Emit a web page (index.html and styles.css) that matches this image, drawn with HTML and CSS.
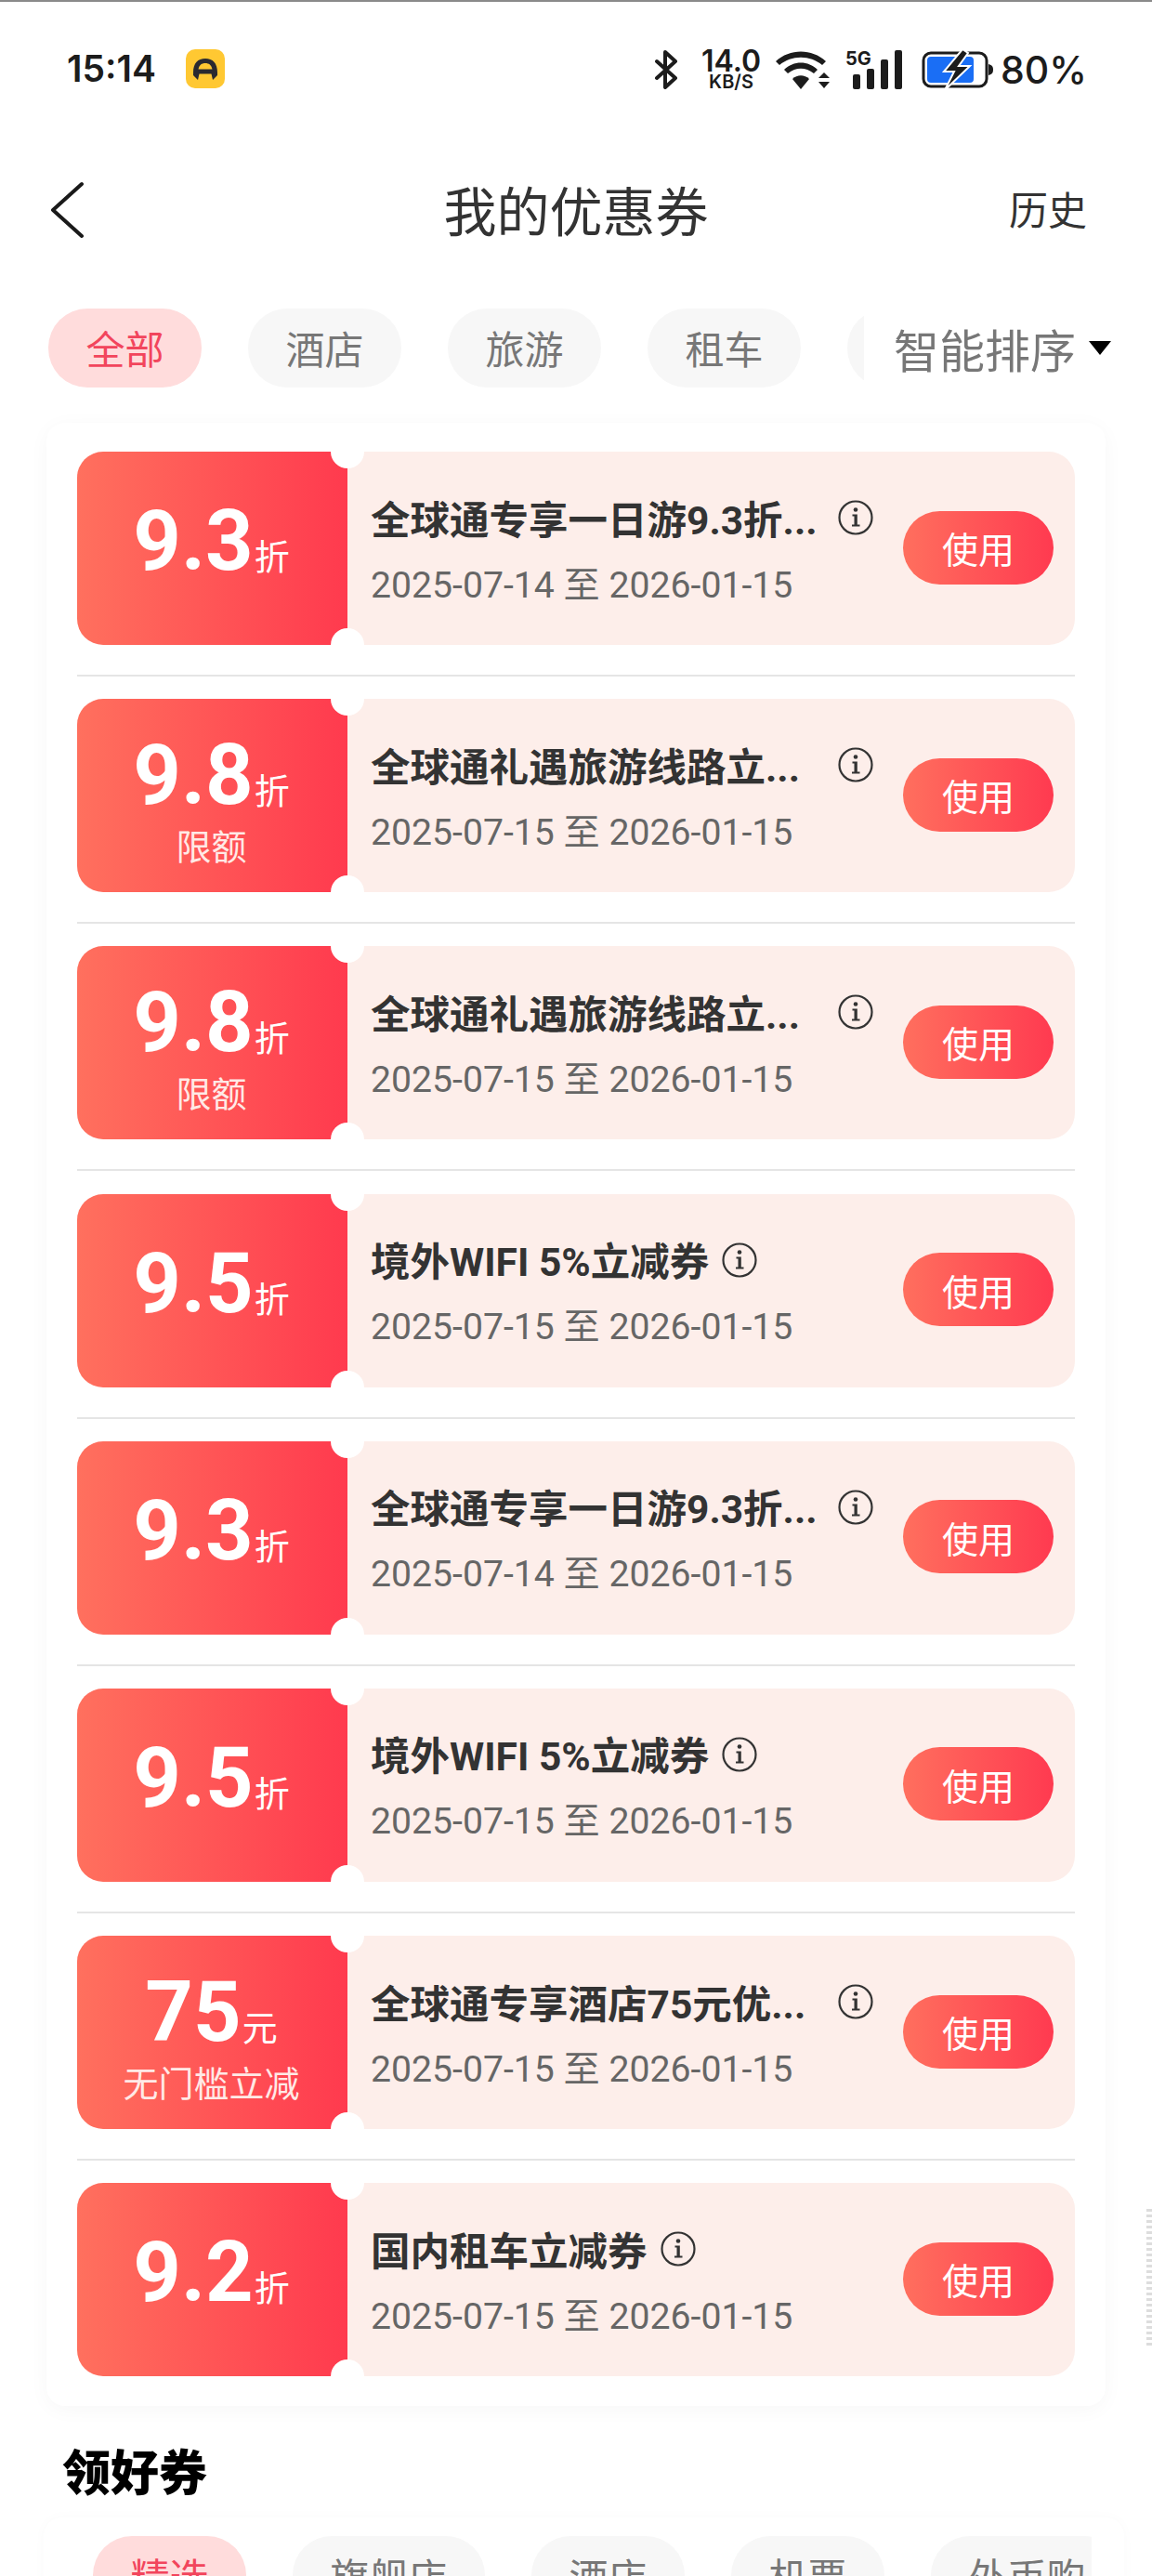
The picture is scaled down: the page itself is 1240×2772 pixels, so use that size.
FILE: index.html
```html
<!DOCTYPE html>
<html lang="zh-CN">
<head>
  <meta charset="UTF-8" />
  <title>我的优惠券</title>
  <link rel="stylesheet" href="styles.css">
</head>
<body>

<div class="statusbar">
  <div class="status-left">
    <span class="time">15:14</span>
    <svg class="app-icon" width="42" height="42" viewBox="0 0 42 42">
      <rect width="42" height="42" rx="10" fill="#ffc832"/>
      <path d="M8 25 C8 15 13 10 21 10 C29 10 34 15 34 25 L34 28 L29 33 L27.500 26.500 L14.500 26.500 L13 33 L8 28 Z M13.500 21.500 L28.500 21.500 C27.500 17 25 15 21 15 C17 15 14.500 17 13.500 21.500 Z" fill="#2a2a30" fill-rule="evenodd"/>
    </svg>
  </div>
  <div class="status-right">
    <svg class="ic-bt" width="26" height="42" viewBox="0 0 26 42" fill="none" stroke="#1c1c1c" stroke-width="4" stroke-linejoin="round" stroke-linecap="round">
      <path d="M3 12 L23 30 L12 40 L12 2 L23 12 L3 30"/>
    </svg>
    <div class="speed">
      <span class="speed-num">14.0</span>
      <span class="speed-unit">KB/S</span>
    </div>
    <svg class="ic-wifi" width="60" height="42" viewBox="0 0 60 42" fill="#1c1c1c">
      <path d="M1 12 C16 -2 40 -2 55 12 L51 16 C38 5 18 5 5 16 Z"/>
      <path d="M10 21 C20 11 36 11 46 21 L42 25 C33 18 23 18 14 25 Z"/>
      <path d="M19 30 C24 25 32 25 37 30 L28 41 Z" transform="translate(0 1)"/>
      <path d="M53 24 L59 30 L47 30 Z"/>
      <path d="M47 34 L59 34 L53 41 Z"/>
    </svg>
    <div class="signal">
      <span class="sig-5g">5G</span>
      <svg width="54" height="42" viewBox="0 0 54 42" fill="#1c1c1c">
        <rect x="0" y="26" width="8" height="16" rx="2"/>
        <rect x="15" y="20" width="8" height="22" rx="2"/>
        <rect x="30" y="10" width="8" height="32" rx="2"/>
        <rect x="45" y="0" width="8" height="42" rx="2"/>
      </svg>
    </div>
    <svg class="ic-batt" width="78" height="44" viewBox="0 0 78 44">
      <rect x="2" y="4" width="68" height="36" rx="8" fill="none" stroke="#1c1c1c" stroke-width="3"/>
      <rect x="6" y="8" width="50" height="28" rx="4" fill="#1a6ef5"/>
      <path d="M72 16 C76 17 77 19 77 22 C77 25 76 27 72 28 Z" fill="#1c1c1c"/>
      <path d="M44 0 L24 24 L35 24 L25 44 L52 18 L40 18 L50 4 Z" fill="#1c1c1c" stroke="#fff" stroke-width="2"/>
    </svg>
    <span class="batt-text">80%</span>
  </div>
</div>

<div class="navbar">
  <svg class="back" width="36" height="62" viewBox="0 0 36 62" fill="none" stroke="#1a1a1a" stroke-width="4" stroke-linecap="round" stroke-linejoin="round">
    <path d="M34 3 L3 31 L34 59"/>
  </svg>
  <div class="nav-title">我的优惠券</div>
  <div class="nav-link">历史</div>
</div>

<div class="filters">
  <div class="tabs">
    <span class="tab active">全部</span>
    <span class="tab">酒店</span>
    <span class="tab">旅游</span>
    <span class="tab">租车</span>
    <span class="tab tab-blank"></span>
  </div>
  <div class="sort">智能排序<i class="sort-arrow"></i></div>
</div>

<div class="card">
  <div class="row">
    <div class="coupon">
      <div class="stub"><div class="amount">9.3<small>折</small></div></div>
      <div class="info">
        <div class="title-row"><span class="title long">全球通专享一日游9.3折...</span><svg class="tip"><use href="#i-info"/></svg></div>
        <div class="date">2025-07-14 至 2026-01-15</div>
      </div>
      <button class="use">使用</button>
    </div>
  </div>
  <div class="row">
    <div class="coupon">
      <div class="stub has-limit"><div class="amount">9.8<small>折</small></div><div class="limit">限额</div></div>
      <div class="info">
        <div class="title-row"><span class="title long">全球通礼遇旅游线路立...</span><svg class="tip"><use href="#i-info"/></svg></div>
        <div class="date">2025-07-15 至 2026-01-15</div>
      </div>
      <button class="use">使用</button>
    </div>
  </div>
  <div class="row">
    <div class="coupon">
      <div class="stub has-limit"><div class="amount">9.8<small>折</small></div><div class="limit">限额</div></div>
      <div class="info">
        <div class="title-row"><span class="title long">全球通礼遇旅游线路立...</span><svg class="tip"><use href="#i-info"/></svg></div>
        <div class="date">2025-07-15 至 2026-01-15</div>
      </div>
      <button class="use">使用</button>
    </div>
  </div>
  <div class="row">
    <div class="coupon">
      <div class="stub"><div class="amount">9.5<small>折</small></div></div>
      <div class="info">
        <div class="title-row"><span class="title">境外WIFI 5%立减券</span><svg class="tip"><use href="#i-info"/></svg></div>
        <div class="date">2025-07-15 至 2026-01-15</div>
      </div>
      <button class="use">使用</button>
    </div>
  </div>
  <div class="row">
    <div class="coupon">
      <div class="stub"><div class="amount">9.3<small>折</small></div></div>
      <div class="info">
        <div class="title-row"><span class="title long">全球通专享一日游9.3折...</span><svg class="tip"><use href="#i-info"/></svg></div>
        <div class="date">2025-07-14 至 2026-01-15</div>
      </div>
      <button class="use">使用</button>
    </div>
  </div>
  <div class="row">
    <div class="coupon">
      <div class="stub"><div class="amount">9.5<small>折</small></div></div>
      <div class="info">
        <div class="title-row"><span class="title">境外WIFI 5%立减券</span><svg class="tip"><use href="#i-info"/></svg></div>
        <div class="date">2025-07-15 至 2026-01-15</div>
      </div>
      <button class="use">使用</button>
    </div>
  </div>
  <div class="row">
    <div class="coupon">
      <div class="stub has-limit"><div class="amount">75<small>元</small></div><div class="limit">无门槛立减</div></div>
      <div class="info">
        <div class="title-row"><span class="title long">全球通专享酒店75元优...</span><svg class="tip"><use href="#i-info"/></svg></div>
        <div class="date">2025-07-15 至 2026-01-15</div>
      </div>
      <button class="use">使用</button>
    </div>
  </div>
  <div class="row">
    <div class="coupon">
      <div class="stub"><div class="amount">9.2<small>折</small></div></div>
      <div class="info">
        <div class="title-row"><span class="title">国内租车立减券</span><svg class="tip"><use href="#i-info"/></svg></div>
        <div class="date">2025-07-15 至 2026-01-15</div>
      </div>
      <button class="use">使用</button>
    </div>
  </div>
</div>

<h2 class="section-title">领好券</h2>

<div class="card-more">
  <div class="tabs-more">
    <span class="tab active">精选</span>
    <span class="tab">旗舰店</span>
    <span class="tab">酒店</span>
    <span class="tab">机票</span>
    <span class="tab">外币购</span>
  </div>
</div>

<div class="edge-mark"></div>

<!-- shared info icon -->
<svg width="0" height="0" class="defs">
  <symbol id="i-info" viewBox="0 0 38 38">
    <circle cx="19" cy="19" r="17.500" fill="none" stroke="#333" stroke-width="2.200"/>
    <circle cx="19" cy="10.500" r="2.300" fill="#333"/>
    <path d="M15.500 15.500 L20.800 15.500 L20.800 26.500 L23.500 26.500 L23.500 28.500 L15 28.500 L15 26.500 L17.500 26.500 L17.500 17.500 L15.500 17.500 Z" fill="#333"/>
  </symbol>
</svg>

</body>
</html>
```

FILE: styles.css
```css
html, body {
  margin: 0;
  height: 2772px;
  overflow: hidden;
  background: #fff;
}
body {
  position: relative;
  border-top: 2px solid #8a8a8a;
  box-sizing: border-box;
  font-family: Roboto, "Noto Sans CJK SC", sans-serif;
  color: #333;
}

/* status bar */
.statusbar {
  height: 148px;
  padding: 0 70px 0 72px;
  display: flex;
  justify-content: space-between;
  align-items: flex-start;
}
.status-left {
  display: flex;
  align-items: center;
  gap: 32px;
  margin-top: 51px;
}
.time {
  font-family: Inter, sans-serif;
  font-weight: 600;
  font-size: 39px;
  line-height: 42px;
  color: #1c1c1c;
}
.app-icon { display: block; }
.status-right {
  display: flex;
  align-items: center;
  margin-top: 51px;
  height: 44px;
}
.status-right svg { display: block; }
.speed {
  margin-left: 24px;
  width: 66px;
  display: flex;
  flex-direction: column;
  align-items: center;
  font-family: Inter, sans-serif;
  font-weight: 600;
  color: #1c1c1c;
}
.speed-num { font-size: 32px; line-height: 26px; }
.speed-unit { font-size: 20px; line-height: 18px; }
.ic-wifi { margin-left: 14px; }
.signal {
  position: relative;
  margin-left: 24px;
  width: 54px;
}
.sig-5g {
  position: absolute;
  left: -8px;
  top: -1px;
  font-family: Inter, sans-serif;
  font-weight: 700;
  font-size: 20px;
  line-height: 20px;
  color: #1c1c1c;
}
.ic-batt { margin-left: 20px; }
.batt-text {
  margin-left: 7px;
  font-family: Inter, sans-serif;
  font-weight: 500;
  font-size: 41px;
  line-height: 44px;
  color: #1c1c1c;
}

/* nav */
.navbar {
  height: 152px;
  padding: 0 70px;
  display: grid;
  grid-template-columns: 1fr auto 1fr;
  align-items: center;
}
.back {
  display: block;
  margin-left: -16px;
}
.nav-title {
  margin-top: -5px;
  font-family: "Noto Sans CJK SC", sans-serif;
  font-size: 57px;
  color: #333;
}
.nav-link {
  margin-top: -5px;
  text-align: right;
  font-family: "Noto Sans CJK SC", sans-serif;
  font-size: 42px;
  color: #333;
}

/* filter tabs */
.filters {
  position: relative;
  padding-left: 52px;
  margin-top: 30px;
  height: 85px;
}
.tabs {
  display: flex;
  gap: 50px;
  overflow: hidden;
}
.tab {
  flex: none;
  height: 85px;
  padding: 0 40.500px;
  border-radius: 42px;
  background: #f7f7f7;
  color: #777;
  font-family: "Noto Sans CJK SC", sans-serif;
  font-size: 42px;
  line-height: 83px;
}
.tab.active {
  background: #ffdcdc;
  color: #f2455c;
}
.tab-blank { width: 84px; }
.sort {
  position: absolute;
  top: 0;
  right: 0;
  left: 930px;
  height: 85px;
  padding-left: 32px;
  background: #fff;
  display: flex;
  align-items: center;
  font-family: "Noto Sans CJK SC", sans-serif;
  font-size: 49px;
  line-height: 79px;
  color: #777;
}
.sort-arrow {
  width: 0;
  height: 0;
  margin-left: 14px;
  border-left: 12px solid transparent;
  border-right: 12px solid transparent;
  border-top: 15px solid #000;
}

/* coupon list */
.card {
  margin: 38px 50px 0 50px;
  padding: 31px 33px 32px;
  border-radius: 20px;
  background: #fff;
  box-shadow: 0 4px 22px rgba(0, 0, 0, 0.035);
}
.row {
  padding-bottom: 32px;
  margin-bottom: 24.200px;
  border-bottom: 2px solid #e5e5e5;
}
.row:last-child {
  padding-bottom: 0;
  margin-bottom: 0;
  border-bottom: none;
}
.coupon {
  position: relative;
  height: 208px;
  display: flex;
  align-items: center;
  border-radius: 28px;
  background: #fdeeea;
  overflow: hidden;
}
.coupon::before,
.coupon::after {
  content: "";
  position: absolute;
  left: 273px;
  width: 36px;
  height: 36px;
  border-radius: 50%;
  background: #fff;
}
.coupon::before { top: -18px; }
.coupon::after { bottom: -18px; }
.stub {
  flex: none;
  width: 291px;
  height: 100%;
  box-sizing: border-box;
  padding: 53px 2px 0 0;
  text-align: center;
  color: #fff;
  background: linear-gradient(90deg, #ff705e, #ff3a4e);
}
.stub.has-limit { padding-top: 39px; }
.amount {
  font-weight: 700;
  font-size: 90px;
  line-height: 88px;
  white-space: nowrap;
}
.amount small {
  margin-left: 1px;
  font-family: "Noto Sans CJK SC", sans-serif;
  font-weight: 400;
  font-size: 38px;
  line-height: 38px;
}
.limit {
  margin-top: 8px;
  font-family: "Noto Sans CJK SC", sans-serif;
  font-size: 38px;
  line-height: 44px;
  color: #ffe9e6;
}
.info {
  flex: 1;
  min-width: 0;
  padding-left: 25px;
  margin-top: 8px;
}
.title-row {
  display: flex;
  align-items: center;
  height: 50px;
}
.title {
  white-space: nowrap;
  font-weight: 700;
  font-size: 42.500px;
  line-height: 50px;
  color: #333;
}
.title.long { width: 489px; }
.tip {
  flex: none;
  width: 38px;
  height: 38px;
  margin: -7px 0 0 14px;
}
.date {
  margin-top: 21px;
  font-size: 39.200px;
  line-height: 46px;
  color: #666;
  white-space: nowrap;
}
.use {
  flex: none;
  width: 162px;
  height: 79px;
  margin: 0 23px 0 0;
  padding: 0;
  border: none;
  border-radius: 40px;
  background: linear-gradient(90deg, #ff6f5e, #ff3a50);
  color: #fff;
  font-family: "Noto Sans CJK SC", sans-serif;
  font-size: 39px;
  transform: translateY(-1px);
}

/* more coupons */
.section-title {
  margin: 38px 0 0 67px;
  font-family: "Noto Sans CJK SC", sans-serif;
  font-weight: 900;
  font-size: 52px;
  line-height: 62px;
  color: #000;
}
.card-more {
  margin: 20px 30px 0 47px;
  padding: 20px 0 0 53px;
  border-radius: 20px;
  background: #fff;
  box-shadow: 0 0 14px rgba(0, 0, 0, 0.025);
}
.tabs-more {
  display: flex;
  gap: 50px;
  width: 1075px;
  overflow: hidden;
}

.edge-mark {
  position: absolute;
  right: 0;
  top: 2375px;
  width: 6px;
  height: 147px;
  background: repeating-linear-gradient(180deg, #bbb 0 3px, #fff 3px 6px);
  opacity: 0.5;
}
.defs { position: absolute; }
```
